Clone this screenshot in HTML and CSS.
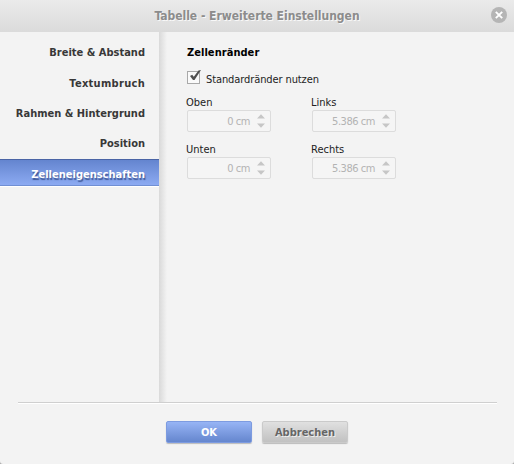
FILE: index.html
```
<!DOCTYPE html>
<html lang="de">
<head>
<meta charset="utf-8">
<title>Tabelle - Erweiterte Einstellungen</title>
<link rel="stylesheet" href="styles.css">
</head>
<body>
<div class="dialog">
  <header class="titlebar">
    <h1>Tabelle - Erweiterte Einstellungen</h1>
    <button class="close" aria-label="Schließen"><svg width="16" height="16" viewBox="0 0 16 16"><circle cx="8" cy="8" r="8" fill="#b5b5b5"/><path d="M4.8 4.8l6.4 6.4M11.2 4.8l-6.4 6.4" stroke="#fff" stroke-width="1.9"/></svg></button>
  </header>
  <div class="body">
    <nav class="menu">
      <a class="item">Breite &amp; Abstand</a>
      <a class="item text">Textumbruch</a>
      <a class="item">Rahmen &amp; Hintergrund</a>
      <a class="item position">Position</a>
      <a class="item selected">Zelleneigenschaften</a>
    </nav>
    <main class="content">
      <h2>Zellenränder</h2>
      <label class="check"><svg width="16" height="16" viewBox="0 0 16 16"><rect x=".5" y="3.5" width="12" height="12" fill="#fafafa" stroke="#a9a9a9"/><path d="M3 8l2.2-1.3 1.6 2L11.5 2.5 14 2 7.5 12H6z" fill="#505050"/></svg><span>Standardränder nutzen</span></label>
      <div class="fields">
        <div class="field"><label>Oben</label><div class="spinner"><span>0 cm</span><svg width="8" height="14" viewBox="0 0 8 14"><path d="M0 4.5L4 .3l4 4.2zM0 9.5h8L4 13.7z" fill="#c6c6c6"/></svg></div></div>
        <div class="field"><label>Links</label><div class="spinner"><span>5.386 cm</span><svg width="8" height="14" viewBox="0 0 8 14"><path d="M0 4.5L4 .3l4 4.2zM0 9.5h8L4 13.7z" fill="#c6c6c6"/></svg></div></div>
        <div class="field"><label>Unten</label><div class="spinner"><span>0 cm</span><svg width="8" height="14" viewBox="0 0 8 14"><path d="M0 4.5L4 .3l4 4.2zM0 9.5h8L4 13.7z" fill="#c6c6c6"/></svg></div></div>
        <div class="field"><label>Rechts</label><div class="spinner"><span>5.386 cm</span><svg width="8" height="14" viewBox="0 0 8 14"><path d="M0 4.5L4 .3l4 4.2zM0 9.5h8L4 13.7z" fill="#c6c6c6"/></svg></div></div>
      </div>
    </main>
  </div>
  <footer class="footer">
    <button class="btn ok">OK</button>
    <button class="btn cancel">Abbrechen</button>
  </footer>
</div>
</body>
</html>
```

FILE: styles.css
```
* { box-sizing: border-box; }
body {
  margin: 0;
  background: #aaa;
  color: #222;
  font: 11px/14px Tahoma, "DejaVu Sans Condensed", "DejaVu Sans", sans-serif;
}
button { border: 0; padding: 0; font: inherit; }
svg { display: block; flex: none; }
.dialog {
  width: 514px;
  height: 464px;
  display: flex;
  flex-direction: column;
  background: #f3f3f3;
  border-radius: 0 0 3px 3px;
}
.titlebar {
  height: 32px;
  display: flex;
  align-items: center;
  justify-content: center;
  position: relative;
  background: linear-gradient(#ebebeb, #dbdbdb);
}
h1 {
  margin: 0;
  font-size: 12px;
  line-height: 16px;
  letter-spacing: -0.02px;
  color: #8c8c8c;
  text-shadow: 1px 1px 0 #f8f8f8;
}
.close {
  position: absolute;
  right: 7px;
  top: 7px;
  background: none;
}
.body { display: flex; height: 370px; }
.menu {
  width: 159px;
  padding-top: 7px;
  display: flex;
  flex-direction: column;
  gap: 3px;
}
.item {
  height: 27px;
  padding-right: 14px;
  line-height: 27px;
  text-align: right;
  font-weight: bold;
  color: #383838;
  white-space: nowrap;
}
.text { height: 28px; line-height: 29px; letter-spacing: 0.3px; }
.position { height: 26px; }
.selected {
  padding-top: 1px;
  line-height: 27px;
  color: #fff;
  background: linear-gradient(#6485cf, #8caaf2);
  border-top: 1px solid #4a64a5;
  border-bottom: 1px solid #708fd3;
  box-shadow: 0 1px #fff;
  text-shadow: 1px 2px 1px #405a98;
}
.content {
  flex: 1;
  padding: 14px 0 0 28px;
  background: linear-gradient(90deg, #d9d9d9, #f3f3f3 8px);
}
h2 { margin: 0; font-size: 11px; line-height: 14px; color: #000; letter-spacing: 0.05px; }
.check {
  height: 16px;
  margin-top: 8px;
  display: flex;
  gap: 3px;
}
.check span { padding-top: 5px; letter-spacing: -0.1px; }
.fields {
  margin-top: 12px;
  display: grid;
  grid-template-columns: 84px 85px;
  column-gap: 41px;
  row-gap: 11px;
}
.field label { display: block; line-height: 14px; height: 14px; margin-left: -1px; }
.field { height: 36px; }
.spinner {
  width: 84px;
  height: 22px;
  padding: 0 5px 0 0;
  display: flex;
  align-items: center;
  justify-content: flex-end;
  gap: 7px;
  border: 1px solid #dcdcdc;
  border-radius: 2px;
  background: #f5f5f5;
  color: #b3b3b3;
}
.spinner span { padding-top: 1px; letter-spacing: -0.45px; }
.footer {
  margin: 0 17px 0 18px;
  height: 62px;
  padding: 18px 0 0 148px;
  display: flex;
  gap: 10px;
  border-top: 1px solid #cfcfcf;
  box-shadow: inset 0 1px #fff;
}
.btn {
  width: 86px;
  height: 22px;
  padding-top: 1px;
  border-radius: 2px;
  font-weight: bold;
  line-height: 20px;
  box-shadow: 0 1px 1px #bbb;
}
.ok {
  color: #fff;
  background: linear-gradient(#97b4f5, #6586ce);
  border: 1px solid #7d9be0;
}
.cancel {
  color: #666;
  background: linear-gradient(#e0e0e0, #c1c1c1);
  border: 1px solid #cacaca;
  text-shadow: 1px 1px #eee;
}
```
